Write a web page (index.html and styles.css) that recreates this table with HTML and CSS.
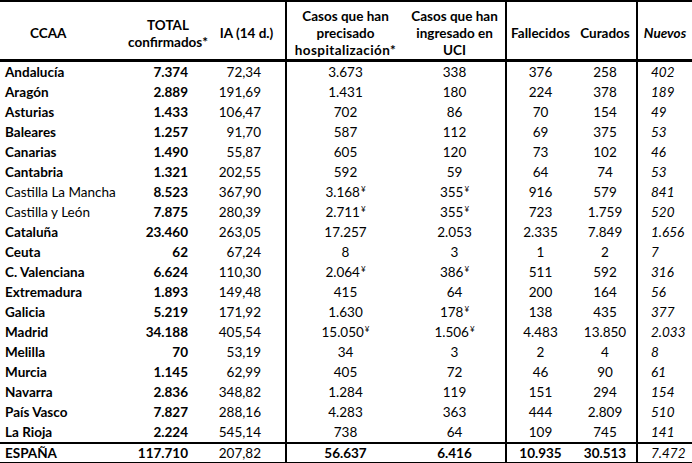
FILE: index.html
```html
<!DOCTYPE html>
<html lang="es">
<head>
<meta charset="utf-8">
<link rel="stylesheet" href="styles.css">
</head>
<body>
<table class="t">
<colgroup>
<col class="w1"><col class="w2"><col class="w3"><col class="w4"><col class="w5"><col class="w6"><col class="w7"><col class="w8">
</colgroup>
<thead>
<tr>
<th class="h1">CCAA</th>
<th>TOTAL<br>confirmados*</th>
<th>IA (14 d.)</th>
<th class="vl">Casos que han<br>precisado<br><span class="wide">hospitalización*</span></th>
<th>Casos que han<br>ingresado en<br>UCI</th>
<th class="vl">Fallecidos</th>
<th>Curados</th>
<th class="vl it">Nuevos</th>
</tr>
</thead>
<tbody>
<tr><td class="n">Andalucía</td><td class="b">7.374</td><td class="r">72,34</td><td class="vl c">3.673</td><td class="c">338</td><td class="vl c">376</td><td class="c">258</td><td class="vl nu">402</td></tr>
<tr><td class="n">Aragón</td><td class="b">2.889</td><td class="r">191,69</td><td class="vl c">1.431</td><td class="c">180</td><td class="vl c">224</td><td class="c">378</td><td class="vl nu">189</td></tr>
<tr><td class="n">Asturias</td><td class="b">1.433</td><td class="r">106,47</td><td class="vl c">702</td><td class="c">86</td><td class="vl c">70</td><td class="c">154</td><td class="vl nu">49</td></tr>
<tr><td class="n">Baleares</td><td class="b">1.257</td><td class="r">91,70</td><td class="vl c">587</td><td class="c">112</td><td class="vl c">69</td><td class="c">375</td><td class="vl nu">53</td></tr>
<tr><td class="n">Canarias</td><td class="b">1.490</td><td class="r">55,87</td><td class="vl c">605</td><td class="c">120</td><td class="vl c">73</td><td class="c">102</td><td class="vl nu">46</td></tr>
<tr><td class="n">Cantabria</td><td class="b">1.321</td><td class="r">202,55</td><td class="vl c">592</td><td class="c">59</td><td class="vl c">64</td><td class="c">74</td><td class="vl nu">53</td></tr>
<tr><td class="n reg">Castilla La Mancha</td><td class="b">8.523</td><td class="r">367,90</td><td class="vl c">3.168<sup class="y">¥</sup></td><td class="c">355<sup class="y">¥</sup></td><td class="vl c">916</td><td class="c">579</td><td class="vl nu">841</td></tr>
<tr><td class="n reg">Castilla y León</td><td class="b">7.875</td><td class="r">280,39</td><td class="vl c">2.711<sup class="y">¥</sup></td><td class="c">355<sup class="y">¥</sup></td><td class="vl c">723</td><td class="c">1.759</td><td class="vl nu">520</td></tr>
<tr><td class="n">Cataluña</td><td class="b">23.460</td><td class="r">263,05</td><td class="vl c">17.257</td><td class="c">2.053</td><td class="vl c">2.335</td><td class="c">7.849</td><td class="vl nu">1.656</td></tr>
<tr><td class="n">Ceuta</td><td class="b">62</td><td class="r">67,24</td><td class="vl c">8</td><td class="c">3</td><td class="vl c">1</td><td class="c">2</td><td class="vl nu">7</td></tr>
<tr><td class="n">C. Valenciana</td><td class="b">6.624</td><td class="r">110,30</td><td class="vl c">2.064<sup class="y">¥</sup></td><td class="c">386<sup class="y">¥</sup></td><td class="vl c">511</td><td class="c">592</td><td class="vl nu">316</td></tr>
<tr><td class="n">Extremadura</td><td class="b">1.893</td><td class="r">149,48</td><td class="vl c">415</td><td class="c">64</td><td class="vl c">200</td><td class="c">164</td><td class="vl nu">56</td></tr>
<tr><td class="n">Galicia</td><td class="b">5.219</td><td class="r">171,92</td><td class="vl c">1.630</td><td class="c">178<sup class="y">¥</sup></td><td class="vl c">138</td><td class="c">435</td><td class="vl nu">377</td></tr>
<tr><td class="n">Madrid</td><td class="b">34.188</td><td class="r">405,54</td><td class="vl c">15.050<sup class="y">¥</sup></td><td class="c">1.506<sup class="y">¥</sup></td><td class="vl c">4.483</td><td class="c">13.850</td><td class="vl nu">2.033</td></tr>
<tr><td class="n">Melilla</td><td class="b">70</td><td class="r">53,19</td><td class="vl c">34</td><td class="c">3</td><td class="vl c">2</td><td class="c">4</td><td class="vl nu">8</td></tr>
<tr><td class="n">Murcia</td><td class="b">1.145</td><td class="r">62,99</td><td class="vl c">405</td><td class="c">72</td><td class="vl c">46</td><td class="c">90</td><td class="vl nu">61</td></tr>
<tr><td class="n">Navarra</td><td class="b">2.836</td><td class="r">348,82</td><td class="vl c">1.284</td><td class="c">119</td><td class="vl c">151</td><td class="c">294</td><td class="vl nu">154</td></tr>
<tr><td class="n">País Vasco</td><td class="b">7.827</td><td class="r">288,16</td><td class="vl c">4.283</td><td class="c">363</td><td class="vl c">444</td><td class="c">2.809</td><td class="vl nu">510</td></tr>
<tr><td class="n">La Rioja</td><td class="b">2.224</td><td class="r">545,14</td><td class="vl c">738</td><td class="c">64</td><td class="vl c">109</td><td class="c">745</td><td class="vl nu">141</td></tr>
</tbody>
<tfoot>
<tr><td class="n">ESPAÑA</td><td class="b">117.710</td><td class="r">207,82</td><td class="vl c bd">56.637</td><td class="c bd">6.416</td><td class="vl c bd">10.935</td><td class="c bd">30.513</td><td class="vl nu">7.472</td></tr>
</tfoot>
</table>
</body>
</html>
```
FILE: styles.css
```css
html, body {
  margin: 0;
  padding: 0;
  background: #fff;
}
body {
  font-family: "Lato", "Open Sans", sans-serif;
  font-size: 13.5px;
  color: #000;
}
.t {
  border-collapse: collapse;
  table-layout: fixed;
  width: 692px;
  border-top: 2px solid #000;
}
.w1 { width: 128px; }
.w2 { width: 80px; }
.w3 { width: 78px; }
.w4 { width: 118px; }
.w5 { width: 102px; }
.w6 { width: 68px; }
.w7 { width: 63px; }
.w8 { width: 55px; }

th {
  font-weight: 700;
  line-height: 17px;
  height: 57px;
  padding: 6px 0 0 0;
  text-align: center;
  vertical-align: middle;
  border-bottom: 3px solid #000;
  box-sizing: border-box;
}
th.h1 { text-align: left; padding-left: 30px; }
th.it { font-style: italic; }
.wide { letter-spacing: 0.4px; }

td {
  height: 20px;
  padding: 0;
  line-height: 20px;
  white-space: nowrap;
  box-sizing: border-box;
}
.vl { border-left: 2px solid #000; }
td.n { font-weight: 700; padding-left: 5px; }
td.reg { font-weight: 400; }
td.b { font-weight: 700; text-align: right; padding-right: 20px; }
td.r { text-align: right; padding-right: 24px; }
td.c { text-align: center; }
td.bd { font-weight: 700; }
td.nu { font-style: italic; padding-left: 13px; }

tfoot td {
  border-top: 2px solid #000;
  border-bottom: 2px solid #000;
  height: 19px;
  line-height: 18px;
}
.y {
  font-size: 8px;
  line-height: 0;
  vertical-align: 5px;
  margin-left: 1px;
}
```
